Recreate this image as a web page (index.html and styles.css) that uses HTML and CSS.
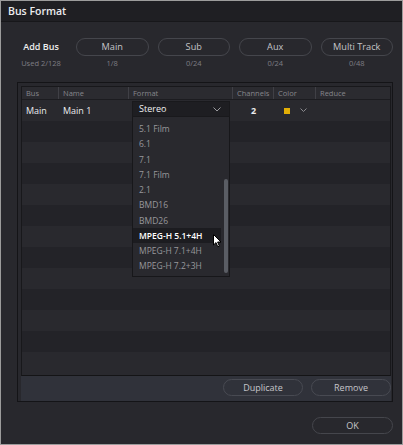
FILE: index.html
```html
<!DOCTYPE html>
<html>
<head>
<meta charset="utf-8">
<link rel="stylesheet" href="styles.css">
</head>
<body>
<div class="win">
  <div class="titlebar">Bus Format</div>
  <div class="busrow">
    <div class="bus add">
      <div class="lbl">Add Bus</div>
      <div class="sub">Used 2/128</div>
    </div>
    <div class="bus">
      <div class="pill">Main</div>
      <div class="sub">1/8</div>
    </div>
    <div class="bus">
      <div class="pill">Sub</div>
      <div class="sub">0/24</div>
    </div>
    <div class="bus">
      <div class="pill">Aux</div>
      <div class="sub">0/24</div>
    </div>
    <div class="bus">
      <div class="pill">Multi Track</div>
      <div class="sub">0/48</div>
    </div>
  </div>

  <div class="frame">
    <div class="table">
      <div class="thead">
        <div class="th">Bus</div>
        <div class="th">Name</div>
        <div class="th">Format</div>
        <div class="th">Channels</div>
        <div class="th">Color</div>
        <div class="th last">Reduce</div>
      </div>
      <div class="tbody">
        <div class="row">
          <div class="td">Main</div>
          <div class="td">Main 1</div>
          <div class="td fmt">
            <div class="select">
              <span>Stereo</span>
              <svg class="chev" width="8" height="5" viewBox="0 0 8 5"><path d="M0.5 0.5 L4 4 L7.5 0.5" fill="none" stroke="#9a9a9e" stroke-width="1"/></svg>
              <div class="list">
                <div class="item">5.1 Film</div>
                <div class="item">6.1</div>
                <div class="item">7.1</div>
                <div class="item">7.1 Film</div>
                <div class="item">2.1</div>
                <div class="item">BMD16</div>
                <div class="item">BMD26</div>
                <div class="item active">MPEG-H 5.1+4H</div>
                <div class="item">MPEG-H 7.1+4H</div>
                <div class="item">MPEG-H 7.2+3H</div>
                <div class="thumb"></div>
                <svg class="cursor" width="9" height="14" viewBox="0 0 9 14"><path d="M0.5 0.5 L0.5 11 L3 8.6 L4.8 12.8 L6.4 12.1 L4.6 8 L8 8 Z" fill="#ffffff" stroke="#000000" stroke-width="1" stroke-linejoin="round"/></svg>
              </div>
            </div>
          </div>
          <div class="td num">2</div>
          <div class="td color">
            <span class="swatch"></span>
            <svg class="chev2" width="7" height="5" viewBox="0 0 7 5"><path d="M0.5 0.5 L3.5 3.5 L6.5 0.5" fill="none" stroke="#8a8a8e" stroke-width="1"/></svg>
          </div>
          <div class="td"></div>
        </div>
        <div class="row"></div>
        <div class="row"></div>
        <div class="row"></div>
        <div class="row"></div>
        <div class="row"></div>
        <div class="row"></div>
        <div class="row"></div>
        <div class="row"></div>
        <div class="row"></div>
        <div class="row"></div>
        <div class="row"></div>
        <div class="row"></div>
      </div>
    </div>
    <div class="actions">
      <div class="btn">Duplicate</div>
      <div class="btn">Remove</div>
    </div>
  </div>

  <div class="footer">
    <div class="btn ok">OK</div>
  </div>
</div>
</body>
</html>
```

FILE: styles.css
```css
html, body {
  margin: 0;
  padding: 0;
  background: #28282d;
}

.win {
  width: 403px;
  height: 445px;
  box-sizing: border-box;
  border: 1px solid #9c9c9c;
  background: #28282d;
  display: flex;
  flex-direction: column;
  font-family: "Open Sans", "Noto Sans", sans-serif;
  color: #e2e2e4;
  overflow: hidden;
}

.titlebar {
  height: 20px;
  line-height: 20px;
  background: #1f1f23;
  border-bottom: 1px solid #17171a;
  padding-left: 7px;
  font-size: 10.5px;
  font-weight: 600;
  color: #ececee;
  flex: none;
}

.busrow {
  display: flex;
  margin-top: 16px;
  flex: none;
}

.bus {
  width: 72.5px;
  margin-left: 9px;
  display: flex;
  flex-direction: column;
  align-items: center;
}

.bus.add {
  width: 52px;
  margin-left: 14px;
  margin-right: 0;
}

.lbl {
  height: 18px;
  line-height: 18px;
  font-size: 9px;
  font-weight: 600;
  color: #eeeeee;
  white-space: nowrap;
}

.pill {
  box-sizing: border-box;
  width: 100%;
  height: 18px;
  line-height: 16px;
  border: 1px solid #45464c;
  border-radius: 9px;
  text-align: center;
  font-size: 9.2px;
  color: #c4c4c8;
  white-space: nowrap;
}

.sub {
  margin-top: 1px;
  height: 12px;
  line-height: 12px;
  font-size: 7.5px;
  color: #7e7e84;
  white-space: nowrap;
}

.frame {
  margin: 13px 9px 0 16px;
  height: 320px;
  box-sizing: border-box;
  border: 1px solid #141417;
  padding: 3px 1px 0 3px;
  display: flex;
  flex-direction: column;
  flex: none;
  background: #28282d;
}

.table {
  flex: 1;
  display: flex;
  flex-direction: column;
  border: 1px solid #18181b;
  border-bottom-color: #141416;
  background: #28282d;
  min-height: 0;
}

.thead, .row {
  display: grid;
  grid-template-columns: 37px 70px 104px 41px 42px 1fr;
}

.thead {
  height: 12px;
  border-bottom: 1px solid #1c1c20;
  background: #2b2b30;
}

.th {
  box-sizing: border-box;
  border-right: 1px solid #404046;
  padding-left: 4px;
  font-size: 7.5px;
  line-height: 12px;
  color: #86868c;
  white-space: nowrap;
}

.th.last {
  border-right: none;
}

.tbody {
  flex: 1;
  background: #29292e;
}

.row {
  height: 21px;
  background: #29292e;
}

.row:nth-child(even) {
  background: #232328;
}

.td {
  padding-left: 4px;
  font-size: 9px;
  line-height: 21px;
  color: #ececee;
  position: relative;
  white-space: nowrap;
}

.td.num {
  padding-left: 0;
  text-align: center;
  font-weight: 700;
}

.td.fmt {
  padding-left: 3px;
}

.td.color {
  display: flex;
  align-items: center;
  padding-left: 10px;
}

.swatch {
  width: 6px;
  height: 6px;
  background: #e2ae06;
}

.chev2 {
  margin-left: 10px;
}

.select {
  position: relative;
  box-sizing: border-box;
  margin-top: 1px;
  width: 98px;
  height: 16px;
  background: #1e1e22;
  border: 1px solid #19191c;
  display: flex;
  align-items: center;
  justify-content: space-between;
  padding: 0 8px 0 6px;
  font-size: 9px;
  line-height: 14px;
  color: #f0f0f2;
}

.list {
  position: absolute;
  left: -1px;
  top: 15px;
  width: 98px;
  height: 160px;
  box-sizing: border-box;
  background: #29292e;
  border: 1px solid #17171a;
  border-top: none;
  padding-top: 4px;
  z-index: 5;
}

.item {
  height: 15.27px;
  line-height: 15.27px;
  padding-left: 6px;
  margin-right: 8px;
  font-size: 8.5px;
  color: #98989c;
}

.item.active {
  background: #1c1c20;
  color: #ffffff;
  font-weight: 600;
}

.thumb {
  position: absolute;
  right: 1px;
  top: 62px;
  width: 4px;
  height: 94px;
  border-radius: 2px;
  background: #5a5d64;
}

.cursor {
  position: absolute;
  left: 80px;
  top: 117px;
}

.actions {
  flex: none;
  height: 25px;
  box-sizing: border-box;
  background: #30323a;
  display: flex;
  justify-content: flex-end;
  align-items: flex-start;
  padding-top: 3px;
  gap: 8px;
}

.btn {
  box-sizing: border-box;
  width: 80px;
  height: 17px;
  line-height: 15px;
  border: 1px solid #484a52;
  border-radius: 9px;
  text-align: center;
  font-size: 9px;
  color: #c6c6ca;
}

.footer {
  display: flex;
  justify-content: flex-end;
  padding-right: 9px;
  margin-top: 15px;
}

.btn.ok {
  width: 81px;
  border-color: #45464c;
}
```
